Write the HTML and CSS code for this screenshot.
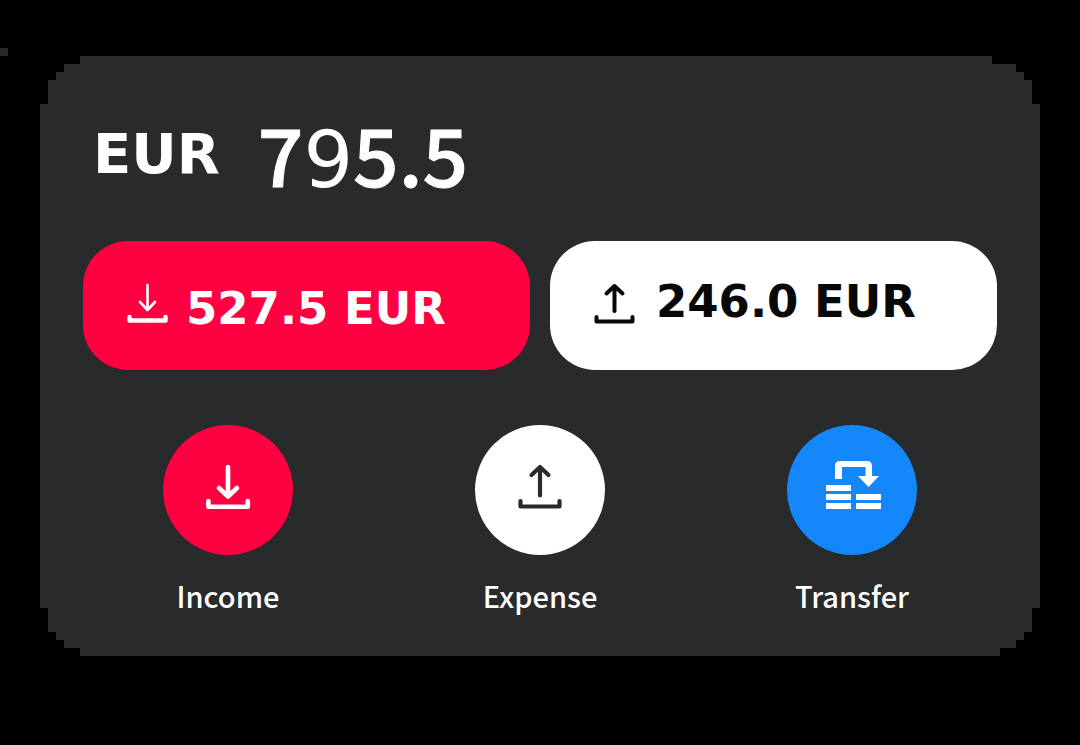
FILE: index.html
```html
<!DOCTYPE html>
<html lang="en">
<head>
<meta charset="utf-8">
<meta name="viewport" content="width=device-width, initial-scale=1">
<title>Balance</title>
<link rel="stylesheet" href="styles.css">
</head>
<body>
<div class="marker"></div>
<main class="card">
  <h1 class="balance"><span class="currency">EUR</span><span class="value">7<span class="light">9</span>5.5</span></h1>
  <section class="totals">
    <button type="button" class="total total-income">
      <svg class="total-icon" viewBox="0 0 42 42" aria-hidden="true">
        <path d="M21.500 3V27M14 20L21.500 28L29 20" stroke-width="2.6"/>
        <path d="M3.500 35V38.500H39.500V35" stroke-width="4.4"/>
      </svg>
      <span>527.5 EUR</span>
    </button>
    <button type="button" class="total total-expense">
      <svg class="total-icon" viewBox="0 0 42 42" aria-hidden="true">
        <path d="M21.500 28V3M13.500 10.500L21.500 3L29.500 10.500" stroke-width="4"/>
        <path d="M3.500 34V38.500H39.500V34" stroke-width="4"/>
      </svg>
      <span>246.0 EUR</span>
    </button>
  </section>
  <nav class="actions">
    <button type="button" class="action">
      <span class="disc disc-income">
        <svg class="disc-icon" viewBox="0 0 60 60" aria-hidden="true">
          <path d="M30 7V36M21 28L30 36.500L39 28" stroke-width="4.6"/>
          <path d="M10.400 41V46.800H49.800V41" stroke-width="4.6"/>
        </svg>
      </span>
      <span>Income</span>
    </button>
    <button type="button" class="action">
      <span class="disc disc-expense">
        <svg class="disc-icon" viewBox="0 0 60 60" aria-hidden="true">
          <path d="M30 35.500V7M21.500 15L30 7L38.500 15" stroke-width="4.2"/>
          <path d="M10.500 41V46.500H49.500V41" stroke-width="4.2"/>
        </svg>
      </span>
      <span>Expense</span>
    </button>
    <button type="button" class="action">
      <span class="disc disc-transfer">
        <svg class="disc-icon solid" viewBox="0 0 60 60" aria-hidden="true">
          <path d="M13 19V6Q13 1 18 1H45Q50 1 50 6V16H57L46.500 27L36 16H43.500V7H20V19Z"/>
          <path d="M4 25H29V31H4ZM4 34H29V40H4ZM4 43H29V49H4ZM34 34H59V40H34ZM34 43H59V49H34Z"/>
        </svg>
      </span>
      <span>Transfer</span>
    </button>
  </nav>
</main>
</body>
</html>
```
FILE: styles.css
```css
* {
  box-sizing: border-box;
}

body {
  margin: 0;
  padding: 56px 40px;
  background: #000;
  color: #fff;
  font-family: "Noto Sans CJK SC", "Noto Sans", sans-serif;
}

.marker {
  position: absolute;
  top: 48px;
  left: 0;
  width: 8px;
  height: 8px;
  background: #282828;
}

.card {
  padding: 56px 32px 41px;
  background: #292a2c;
  clip-path: polygon(
    40px 0, calc(100% - 48px) 0, calc(100% - 48px) 8px,
    calc(100% - 24px) 8px, calc(100% - 24px) 16px,
    calc(100% - 16px) 16px, calc(100% - 16px) 24px,
    calc(100% - 8px) 24px, calc(100% - 8px) 48px,
    100% 48px, 100% calc(100% - 48px),
    calc(100% - 8px) calc(100% - 48px), calc(100% - 8px) calc(100% - 24px),
    calc(100% - 16px) calc(100% - 24px), calc(100% - 16px) calc(100% - 16px),
    calc(100% - 24px) calc(100% - 16px), calc(100% - 24px) calc(100% - 8px),
    calc(100% - 40px) calc(100% - 8px), calc(100% - 40px) 100%,
    40px 100%, 40px calc(100% - 8px),
    24px calc(100% - 8px), 24px calc(100% - 16px),
    16px calc(100% - 16px), 16px calc(100% - 24px),
    8px calc(100% - 24px), 8px calc(100% - 48px),
    0 calc(100% - 48px), 0 48px,
    8px 48px, 8px 24px, 16px 24px, 16px 16px,
    24px 16px, 24px 8px, 40px 8px
  );
}

.balance {
  display: flex;
  gap: 38px;
  margin: 0;
  padding: 0 21px;
}

.currency {
  font: bold 56px/84px "DejaVu Sans", sans-serif;
}

.value {
  font-size: 80px;
  font-weight: 500;
  line-height: 80px;
  -webkit-text-stroke: 1px currentColor;
}

.light {
  font-family: "DejaVu Sans", sans-serif;
  font-size: 78px;
  font-weight: 400;
  -webkit-text-stroke: 0;
}

.totals {
  display: grid;
  grid-template-columns: 1fr 1fr;
  gap: 20px;
  margin: 41px 11px 0;
}

button {
  border: 0;
  color: inherit;
  cursor: pointer;
}

.total {
  display: flex;
  gap: 18px;
  height: 129px;
  padding: 42px 43px;
  border-radius: 45px;
  font: bold 45px/54px "DejaVu Sans", sans-serif;
  white-space: nowrap;
}

.total-income {
  align-items: flex-end;
  padding-bottom: 34px;
  background: #ff0040;
}

.total-expense {
  gap: 21px;
  align-items: flex-start;
  padding-top: 34px;
  background: #fff;
  color: #080808;
}

.total-icon {
  flex: none;
  width: 42px;
  height: 42px;
}

.total-income .total-icon {
  margin-bottom: 12px;
}

.total-expense .total-icon {
  margin-top: 8px;
}

svg {
  fill: none;
  stroke: currentColor;
  stroke-linecap: round;
  stroke-linejoin: round;
}

.solid {
  fill: currentColor;
  stroke: none;
}

.actions {
  display: grid;
  grid-template-columns: repeat(3, 1fr);
  margin-top: 55px;
}

.action {
  display: flex;
  flex-direction: column;
  align-items: center;
  gap: 20px;
  padding: 0;
  background: none;
  font: 500 29px/40px "Noto Sans CJK SC", "Noto Sans", sans-serif;
}

.disc {
  display: grid;
  place-items: center;
  width: 130px;
  height: 130px;
  border-radius: 50%;
}

.disc-income {
  background: #ff0040;
}

.disc-expense {
  background: #fff;
  color: #292a2c;
}

.disc-transfer {
  background: #1487fb;
}

.disc-icon {
  width: 60px;
  height: 60px;
}
```
